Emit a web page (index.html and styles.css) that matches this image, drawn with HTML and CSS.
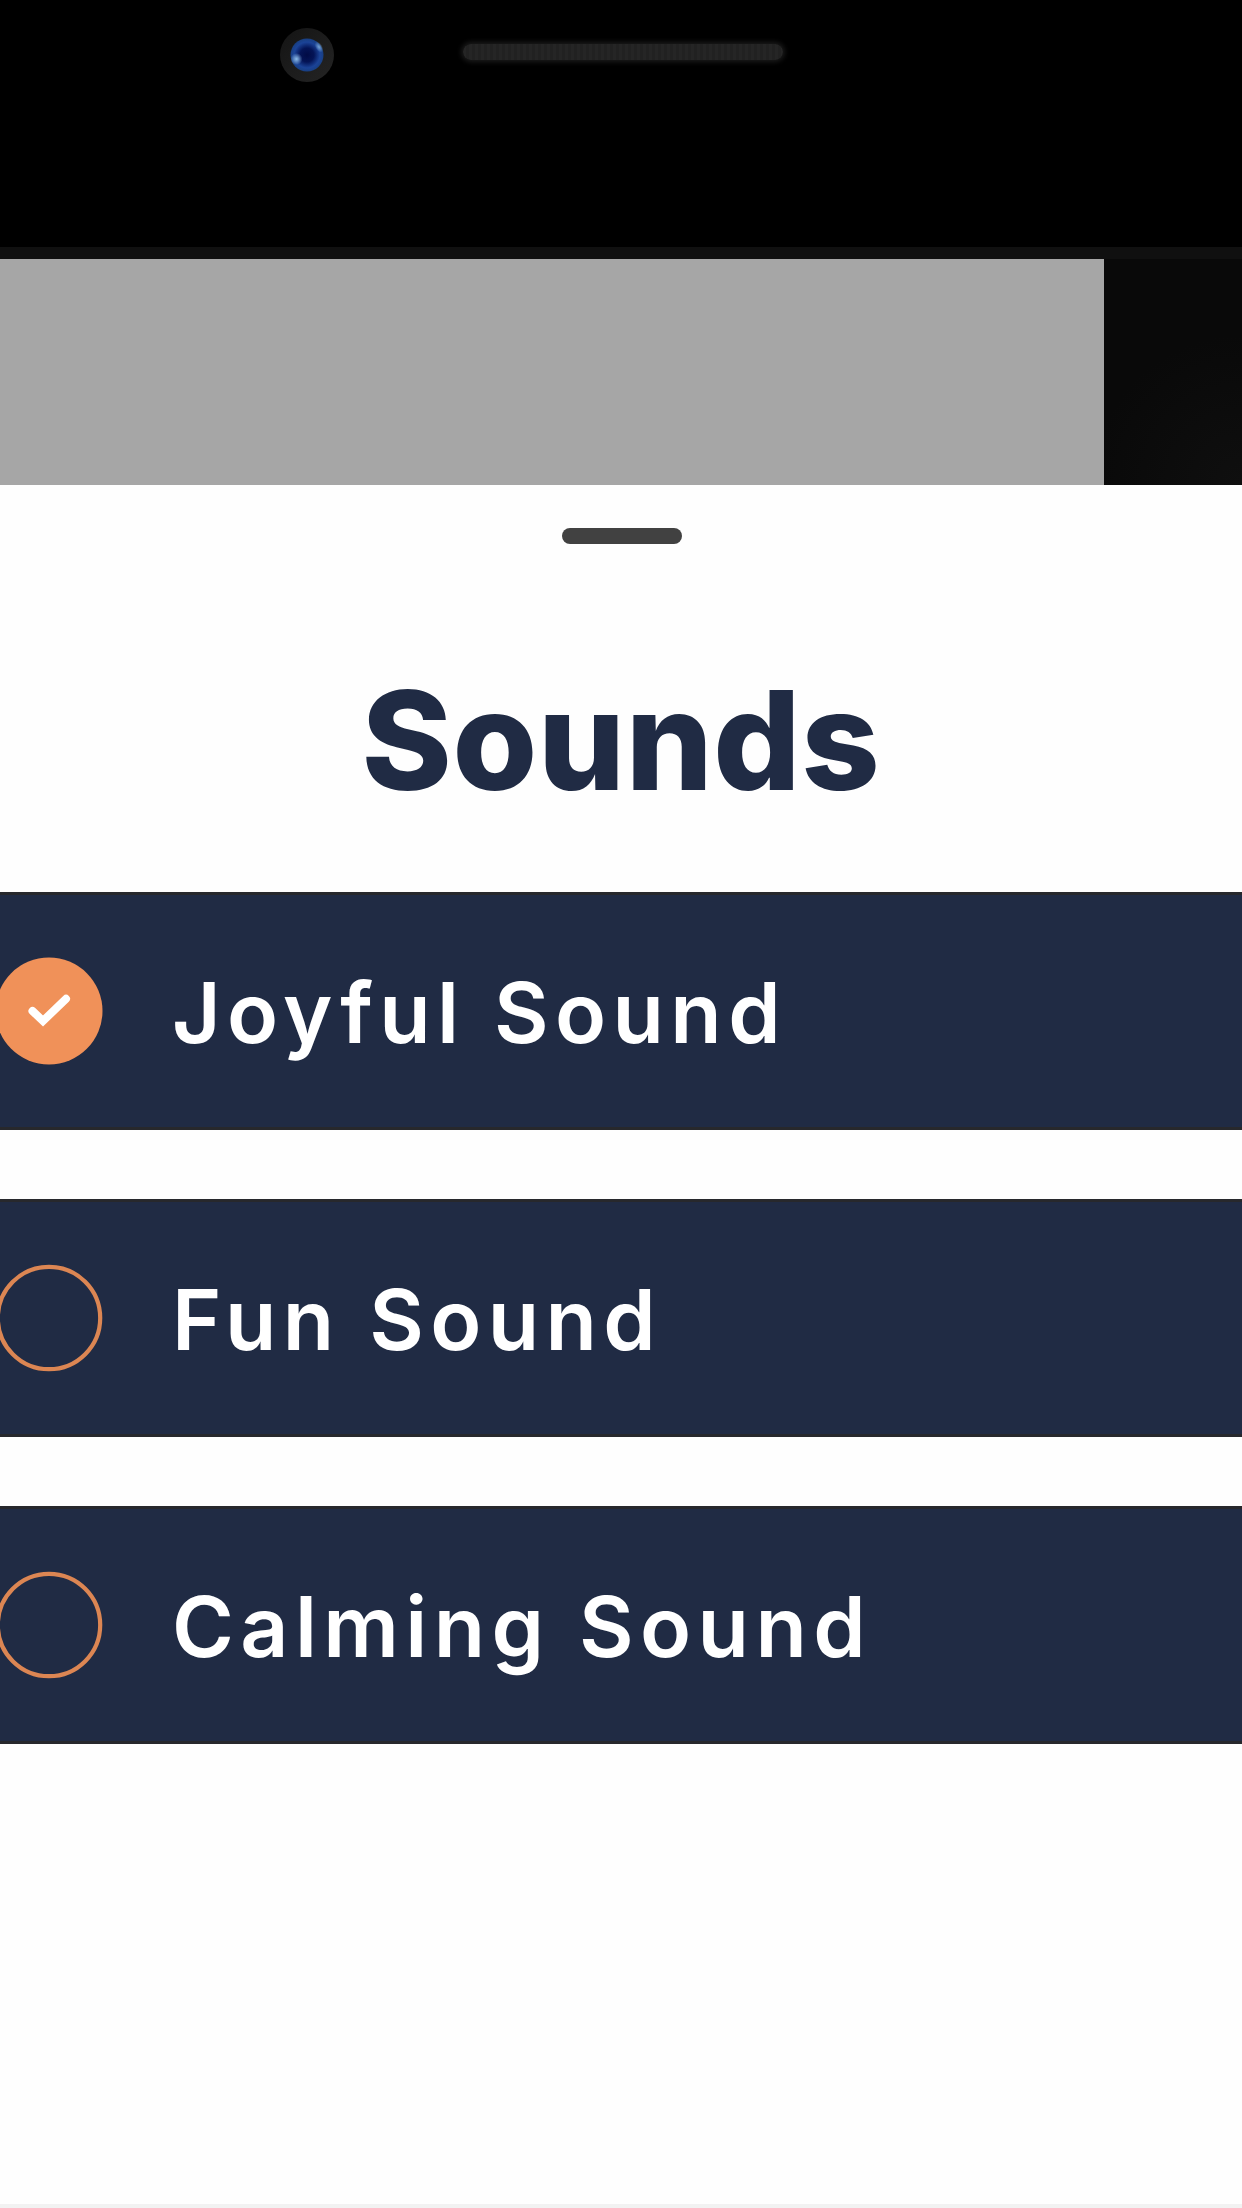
FILE: index.html
```
<!DOCTYPE html>
<html lang="en">
<head>
<meta charset="utf-8">
<title>Sounds</title>
<link rel="stylesheet" href="styles.css">
</head>
<body>
<div class="device">
  <header class="bezel">
    <svg class="camera" viewBox="0 0 56 56" aria-hidden="true">
      <defs>
        <radialGradient id="lens"><stop offset="0" stop-color="#010b45"/><stop offset=".42" stop-color="#041456"/><stop offset=".78" stop-color="#1b4397"/><stop offset="1" stop-color="#183f82"/></radialGradient>
        <radialGradient id="glint"><stop offset="0" stop-color="#8dbce8"/><stop offset="1" stop-color="#8dbce8" stop-opacity="0"/></radialGradient>
        <linearGradient id="rim" x2="1" y2="1"><stop offset="0" stop-color="#141414"/><stop offset="1" stop-color="#242424"/></linearGradient>
      </defs>
      <circle cx="28" cy="28" r="27" fill="url(#rim)"/>
      <circle cx="28" cy="28" r="16.5" fill="url(#lens)"/>
      <circle cx="17.5" cy="32" r="6" fill="url(#glint)"/>
      <ellipse cx="40" cy="20" rx="3.5" ry="6" fill="url(#glint)" opacity=".8" transform="rotate(-30 40 20)"/>
    </svg>
    <div class="speaker"></div>
  </header>
  <div class="backdrop"><div class="dimmed"></div></div>
  <main class="sheet">
    <div class="handle"></div>
    <h1 class="title">Sounds</h1>
    <ul class="options">
      <li class="option">
        <svg class="radio" viewBox="0 0 108 108" aria-hidden="true"><circle cx="54" cy="54" r="53.5" fill="#f09159"/><path d="M37.5 54 48 64 71 41.8" fill="none" stroke="#fff" stroke-width="8" stroke-linecap="round"/></svg>
        <span class="label">Joyful Sound</span>
      </li>
      <li class="option">
        <svg class="radio" viewBox="0 0 108 108" aria-hidden="true"><circle cx="54" cy="54" r="51.2" fill="none" stroke="#dc8653" stroke-width="4.2"/></svg>
        <span class="label">Fun Sound</span>
      </li>
      <li class="option">
        <svg class="radio" viewBox="0 0 108 108" aria-hidden="true"><circle cx="54" cy="54" r="51.2" fill="none" stroke="#dc8653" stroke-width="4.2"/></svg>
        <span class="label">Calming Sound</span>
      </li>
    </ul>
  </main>
</div>
</body>
</html>
```
FILE: styles.css
```
* { box-sizing: border-box; }
body { margin: 0; font-family: Inter, "Liberation Sans", sans-serif; }
.device { width: 1242px; height: 2208px; overflow: hidden; display: flex; flex-direction: column; background: #000; }
.bezel { height: 259px; flex: none; display: flex; align-items: flex-start; padding: 27px 0 0 279px; border-bottom: 12px solid #101010; }
.camera { width: 56px; height: 56px; }
.speaker {
  width: 320px; height: 16px; margin: 17px 0 0 128px; border-radius: 8px;
  background: repeating-linear-gradient(90deg, #252525 0 3px, #212121 3px 6px);
  box-shadow: 0 0 5px 2px #1b1b1b;
}
.backdrop { height: 226px; flex: none; background: radial-gradient(circle at 100% 100%, #0f0f0f, #090909 150px); }
.dimmed { width: 1104px; height: 100%; background: #a6a6a6; }
.sheet { flex: 1; display: flex; flex-direction: column; align-items: center; background: #fefefe; border-bottom: 4px solid #f2f2f2; }
.handle { width: 120px; height: 16px; margin: 43px 0 0 2px; border-radius: 8px; background: #414141; }
.title { height: 160px; line-height: 160px; margin: 116px 0 72px; font-size: 137px; font-weight: 800; letter-spacing: 0.6px; color: #202b44; }
.options { width: 100%; margin: 0; padding: 0; list-style: none; display: flex; flex-direction: column; gap: 69px; }
.option { height: 238px; display: flex; align-items: center; gap: 69px; background: #202b44; border: solid #27282c; border-width: 3px 0; }
.radio { width: 108px; height: 108px; margin-left: -5px; flex: none; }
.label { padding-top: 3px; font-size: 84px; line-height: 100px; font-weight: 600; letter-spacing: 6.4px; word-spacing: 1px; color: #fff; white-space: nowrap; }
```
